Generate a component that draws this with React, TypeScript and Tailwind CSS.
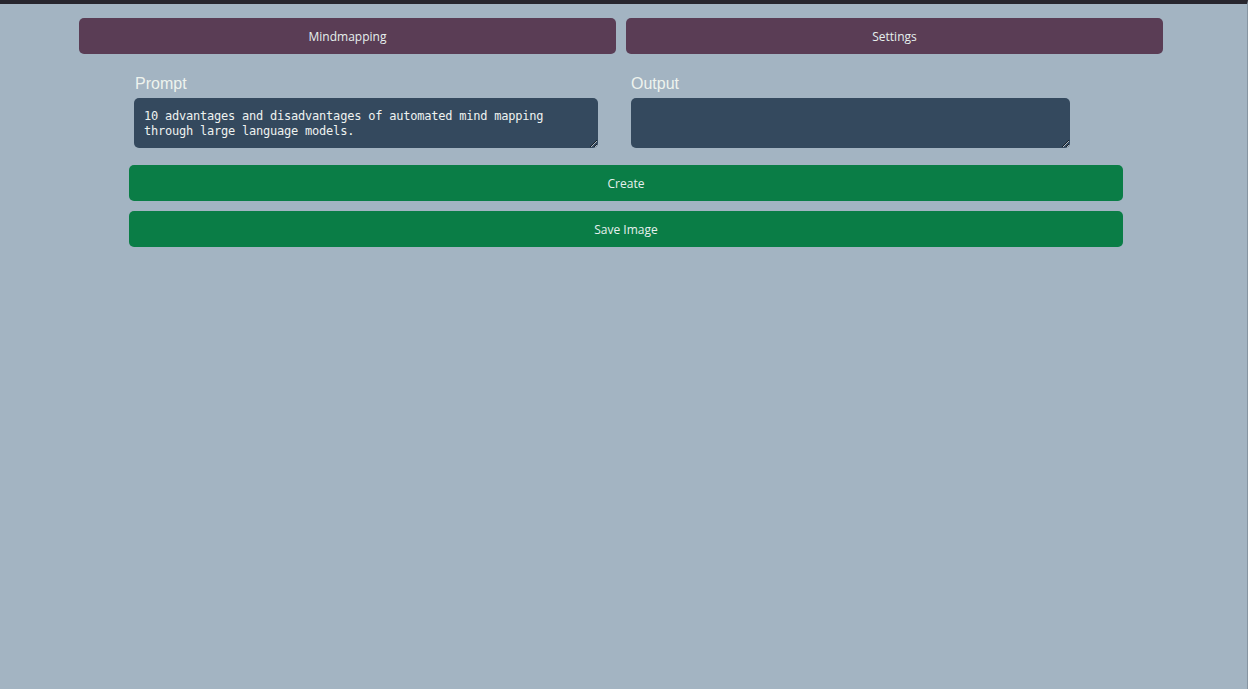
import React from "react";

export default function App() {
  const btnFont = { fontFamily: '"Open Sans", "Noto Sans", sans-serif' } as React.CSSProperties;
  return (
    <div className="h-[689px] w-full overflow-hidden bg-[#a3b4c2] border-t-[4px] border-[#27262e] border-r border-r-[#8695a2] flex flex-col">
      <div className="flex gap-[10px] pl-[79px] mt-[14px]" style={btnFont}>
        <button className="w-[537px] h-[36px] pt-[2px] rounded-[5px] bg-[#5a3d55] text-[#e6f0ee] text-[12px]">
          Mindmapping
        </button>
        <button className="w-[537px] h-[36px] pt-[2px] rounded-[5px] bg-[#5a3d55] text-[#e6f0ee] text-[12px]">
          Settings
        </button>
      </div>

      <div className="flex mt-[20px] pl-[134px]">
        <div className="flex flex-col w-[464px]">
          <label
            className="text-[16px] leading-[20px] text-[#eef3ee] pl-[1px] mb-[4px]"
            style={{ fontFamily: '"Liberation Sans", Arial, sans-serif' }}
          >
            Prompt
          </label>
          <textarea
            className="h-[50px] w-[464px] rounded-[5px] bg-[#34495e] text-[#eef2f0] text-[12px] leading-[15px] tracking-[-0.22px] pt-[11px] px-[10px] outline-none block"
            style={{ fontFamily: '"DejaVu Sans Mono", monospace' }}
            defaultValue={"10 advantages and disadvantages of automated mind mapping through large language models."}
          />
        </div>
        <div className="flex flex-col w-[439px] ml-[33px]">
          <label
            className="text-[16px] leading-[20px] text-[#eef3ee] mb-[4px]"
            style={{ fontFamily: '"Liberation Sans", Arial, sans-serif' }}
          >
            Output
          </label>
          <textarea
            className="h-[50px] w-[439px] rounded-[5px] bg-[#34495e] text-[#eef2f0] text-[12px] leading-[15px] pt-[11px] px-[10px] outline-none block"
            style={{ fontFamily: '"DejaVu Sans Mono", monospace' }}
          />
        </div>
      </div>

      <div className="flex flex-col gap-[10px] pl-[129px] mt-[17px]" style={btnFont}>
        <button className="w-[994px] h-[36px] pt-[2px] rounded-[5px] bg-[#0a7d46] text-[#e6f0ee] text-[12px]">
          Create
        </button>
        <button className="w-[994px] h-[36px] pt-[2px] rounded-[5px] bg-[#0a7d46] text-[#e6f0ee] text-[12px]">
          Save Image
        </button>
      </div>
    </div>
  );
}
